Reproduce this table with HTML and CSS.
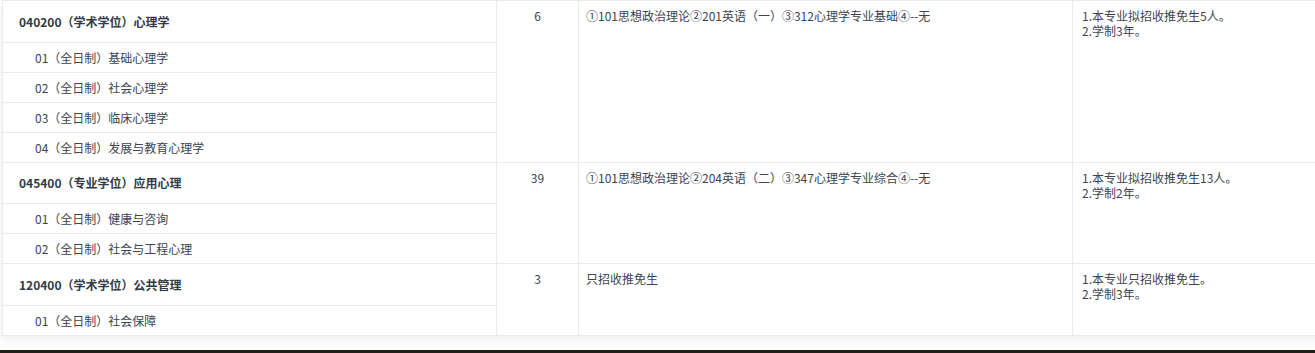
FILE: index.html
```html
<!DOCTYPE html>
<html lang="zh">
<head>
<meta charset="utf-8">
<title>专业目录</title>
<link rel="stylesheet" href="styles.css">
</head>
<body>
<div class="page">
  <div class="card">
    <table class="plan">
      <colgroup>
        <col class="c-major">
        <col class="c-num">
        <col class="c-exam">
        <col class="c-note">
      </colgroup>
      <tbody>
        <tr>
          <td class="major">
            <div class="m-head">040200（学术学位）心理学</div>
            <div class="m-sub">01（全日制）基础心理学</div>
            <div class="m-sub">02（全日制）社会心理学</div>
            <div class="m-sub">03（全日制）临床心理学</div>
            <div class="m-sub last">04（全日制）发展与教育心理学</div>
          </td>
          <td class="num">6</td>
          <td class="exam">①101思想政治理论②201英语（一）③312心理学专业基础④--无</td>
          <td class="note">1.本专业拟招收推免生5人。<br>2.学制3年。</td>
        </tr>
        <tr>
          <td class="major">
            <div class="m-head">045400（专业学位）应用心理</div>
            <div class="m-sub">01（全日制）健康与咨询</div>
            <div class="m-sub last">02（全日制）社会与工程心理</div>
          </td>
          <td class="num">39</td>
          <td class="exam">①101思想政治理论②204英语（二）③347心理学专业综合④--无</td>
          <td class="note">1.本专业拟招收推免生13人。<br>2.学制2年。</td>
        </tr>
        <tr>
          <td class="major">
            <div class="m-head">120400（学术学位）公共管理</div>
            <div class="m-sub last">01（全日制）社会保障</div>
          </td>
          <td class="num">3</td>
          <td class="exam">只招收推免生</td>
          <td class="note">1.本专业只招收推免生。<br>2.学制3年。</td>
        </tr>
      </tbody>
    </table>
  </div>
  <div class="footer-bar"></div>
</div>
</body>
</html>
```

FILE: styles.css
```css
html, body {
  margin: 0;
  padding: 0;
  overflow: hidden;
  background: #ffffff;
}

body {
  font-family: "Noto Sans CJK SC", "Noto Sans", "Liberation Sans", sans-serif;
  font-size: 12px;
  color: #3d4450;
}

.page {
  width: 1315px;
  height: 353px;
  display: flex;
  flex-direction: column;
}

.card {
  margin-left: 2px;
  width: 1330px;
  background: #fff;
  box-shadow: 0 3px 10px rgba(40, 60, 90, 0.10);
}

.plan {
  width: 1330px;
  border-collapse: collapse;
  table-layout: fixed;
}

.c-major { width: 494px; }
.c-num { width: 82px; }
.c-exam { width: 494px; }
.c-note { width: auto; }

.plan td {
  border: 1px solid #e6ebef;
  vertical-align: top;
  padding: 0;
  line-height: 15px;
}

.major {
  padding: 0;
}

.m-head {
  height: 40.5px;
  display: flex;
  align-items: center;
  padding-left: 16px;
  font-weight: bold;
  color: #333a44;
  border-bottom: 1px solid #e6ebef;
}

.m-sub {
  height: 29px;
  display: flex;
  align-items: center;
  padding-left: 32px;
  color: #3d4450;
  border-bottom: 1px solid #e6ebef;
}

.m-sub.last {
  border-bottom: none;
}

.num {
  text-align: center;
}

.plan td.num,
.plan td.exam,
.plan td.note {
  padding-top: 7px;
}

.plan td.exam {
  padding-left: 7px;
}

.plan td.note {
  padding-left: 9px;
}

.footer-bar {
  margin-top: auto;
  height: 3px;
  background: #1f1f18;
}
```
